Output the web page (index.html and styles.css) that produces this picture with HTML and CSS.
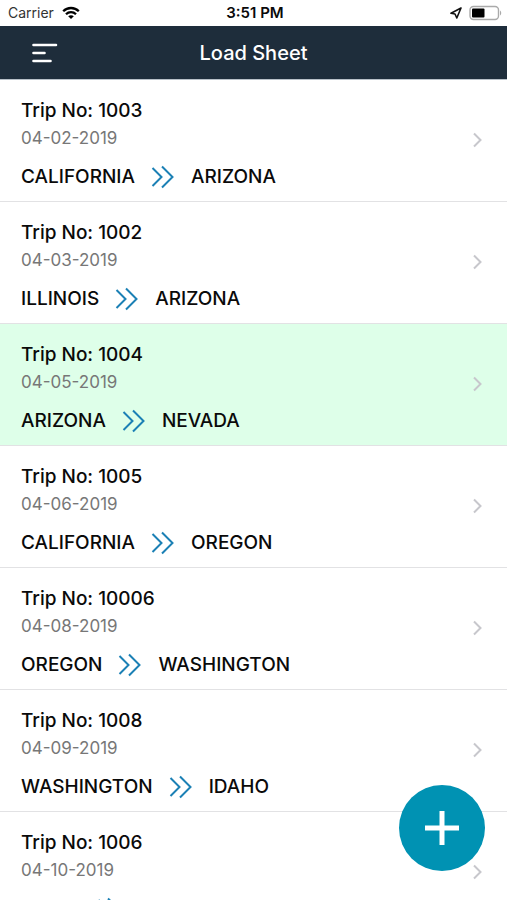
FILE: index.html
```html
<!DOCTYPE html>
<html lang="en">
<head>
  <meta charset="UTF-8">
  <meta name="viewport" content="width=device-width, initial-scale=1.0">
  <title>Load Sheet</title>
  <link rel="stylesheet" href="styles.css">
</head>
<body>
  <!-- Shared icons -->
  <svg class="sprite" aria-hidden="true">
    <symbol id="arrows" viewBox="0 0 24 24">
      <path d="M1.500 3 10.500 12 1.500 21M11 1.500 21.500 12 11 22.500" fill="none" stroke="#1b80b5" stroke-width="2"/>
    </symbol>
    <symbol id="chevron" viewBox="0 0 12 16">
      <path d="M2 1.500 8.500 8 2 14.500" fill="none" stroke="#c7c7cc" stroke-width="2"/>
    </symbol>
  </svg>

  <div class="app">
    <div class="status-bar">
      <div class="carrier">
        <span>Carrier</span>
        <svg width="18" height="14" viewBox="0 0 18 14">
          <g fill="none" stroke="#000" stroke-width="2.300">
            <path d="M1.200 5.200C5.500.9 12.500.9 16.800 5.200"/>
            <path d="M4 8.200C6.800 5.400 11.200 5.400 14 8.200"/>
          </g>
          <path d="M6.200 10.300C7.800 8.900 10.200 8.900 11.800 10.300L9 13Z" fill="#000"/>
        </svg>
      </div>
      <span class="time">3:51 PM</span>
      <div class="indicators">
        <svg width="12" height="12" viewBox="0 0 12 12">
          <path d="M11 1 1 6.300 5 7 6.800 11Z" fill="none" stroke="#111" stroke-width="1.600" stroke-linejoin="round"/>
        </svg>
        <svg width="33" height="16" viewBox="0 0 33 16">
          <rect x="1" y="1.500" width="28.500" height="13" rx="3.500" fill="#fff" stroke="#aaa" stroke-width="1.400"/>
          <path d="M31 5.500C32.600 6.300 32.600 9.700 31 10.500Z" fill="#aaa"/>
          <rect x="3" y="3.500" width="12.500" height="9" rx="1" fill="#000"/>
        </svg>
      </div>
    </div>

    <header class="navbar">
      <button class="menu-button" type="button" aria-label="Menu">
        <svg width="26" height="20" viewBox="0 0 26 20">
          <path d="M1.500 2H24M1.500 10H12.500M1.500 18H18.500" stroke="#fff" stroke-width="2.600" stroke-linecap="round"/>
        </svg>
      </button>
      <h1>Load Sheet</h1>
    </header>

    <main class="trips">
      <a class="trip" href="#1003">
        <div class="info">
          <h2>Trip No: 1003</h2>
          <p class="date">04-02-2019</p>
          <p class="route"><span>CALIFORNIA</span><svg class="arrows"><use href="#arrows"/></svg><span>ARIZONA</span></p>
        </div>
        <svg class="chevron"><use href="#chevron"/></svg>
      </a>
      <a class="trip" href="#1002">
        <div class="info">
          <h2>Trip No: 1002</h2>
          <p class="date">04-03-2019</p>
          <p class="route"><span>ILLINOIS</span><svg class="arrows"><use href="#arrows"/></svg><span>ARIZONA</span></p>
        </div>
        <svg class="chevron"><use href="#chevron"/></svg>
      </a>
      <a class="trip active" href="#1004">
        <div class="info">
          <h2>Trip No: 1004</h2>
          <p class="date">04-05-2019</p>
          <p class="route"><span>ARIZONA</span><svg class="arrows"><use href="#arrows"/></svg><span>NEVADA</span></p>
        </div>
        <svg class="chevron"><use href="#chevron"/></svg>
      </a>
      <a class="trip" href="#1005">
        <div class="info">
          <h2>Trip No: 1005</h2>
          <p class="date">04-06-2019</p>
          <p class="route"><span>CALIFORNIA</span><svg class="arrows"><use href="#arrows"/></svg><span>OREGON</span></p>
        </div>
        <svg class="chevron"><use href="#chevron"/></svg>
      </a>
      <a class="trip" href="#10006">
        <div class="info">
          <h2>Trip No: 10006</h2>
          <p class="date">04-08-2019</p>
          <p class="route"><span>OREGON</span><svg class="arrows"><use href="#arrows"/></svg><span>WASHINGTON</span></p>
        </div>
        <svg class="chevron"><use href="#chevron"/></svg>
      </a>
      <a class="trip" href="#1008">
        <div class="info">
          <h2>Trip No: 1008</h2>
          <p class="date">04-09-2019</p>
          <p class="route"><span>WASHINGTON</span><svg class="arrows"><use href="#arrows"/></svg><span>IDAHO</span></p>
        </div>
        <svg class="chevron"><use href="#chevron"/></svg>
      </a>
      <a class="trip" href="#1006">
        <div class="info">
          <h2>Trip No: 1006</h2>
          <p class="date">04-10-2019</p>
          <p class="route"><span>IDAHO</span><svg class="arrows"><use href="#arrows"/></svg></p>
        </div>
        <svg class="chevron"><use href="#chevron"/></svg>
      </a>
    </main>

    <button class="add-button" type="button" aria-label="Add trip">
      <svg width="36" height="36" viewBox="0 0 36 36">
        <path d="M18 1V35M1 18H35" stroke="#fff" stroke-width="5"/>
      </svg>
    </button>
  </div>
</body>
</html>
```
FILE: styles.css
```css
:root {
  --navy: #1e2d3b;
  --teal: #0092b3;
  --highlight: #deffe9;
  --line: #e2e2e4;
  --muted: #777;
}

* {
  margin: 0;
  padding: 0;
  box-sizing: border-box;
}

body {
  font-family: Inter, 'Liberation Sans', sans-serif;
  background: #fff;
  color: #0a0a0a;
}

button {
  border: none;
  cursor: pointer;
}

svg {
  display: block;
  flex-shrink: 0;
}

.sprite {
  position: absolute;
  width: 0;
  height: 0;
}

.app {
  display: flex;
  flex-direction: column;
  height: 100vh;
}

/* Status bar */
.status-bar {
  display: grid;
  grid-template-columns: 1fr auto 1fr;
  align-items: center;
  padding: 0 5px 0 8px;
  font-size: 14px;
  line-height: 26px;
}

.carrier {
  display: flex;
  align-items: center;
  gap: 8px;
  color: #333;
}

.time {
  font-size: 15px;
  font-weight: 600;
}

.indicators {
  display: flex;
  align-items: center;
  justify-content: flex-end;
  gap: 7px;
}

/* Header */
.navbar {
  display: grid;
  grid-template-columns: 1fr auto 1fr;
  align-items: center;
  height: 54px;
  flex-shrink: 0;
  padding: 0 24px;
  background: var(--navy);
  border-bottom: 1px solid #b8c0c8;
  color: #fff;
}

.navbar h1 {
  font-size: 20px;
  font-weight: 500;
}

.menu-button {
  justify-self: start;
  padding: 8px;
  background: none;
}

/* Trip list */
.trips {
  flex: 1;
  min-height: 0;
  overflow-y: auto;
  scrollbar-width: none;
}

.trip {
  display: flex;
  align-items: center;
  justify-content: space-between;
  padding: 19px 23px 12px 21px;
  border-bottom: 1px solid var(--line);
  color: inherit;
  text-decoration: none;
  line-height: 24px;
}

.trip.active {
  background: var(--highlight);
}

.trip h2 {
  font-size: 19px;
  font-weight: 500;
}

.date {
  margin: 3px 0 15px;
  font-size: 17px;
  color: var(--muted);
}

.route {
  display: flex;
  align-items: center;
  gap: 16px;
  font-size: 19px;
  font-weight: 500;
}

.arrows {
  width: 24px;
  height: 24px;
}

.chevron {
  width: 12px;
  height: 16px;
  margin-bottom: 8px;
}

/* Floating button */
.add-button {
  position: fixed;
  right: 22px;
  bottom: 29px;
  display: flex;
  align-items: center;
  justify-content: center;
  width: 86px;
  height: 86px;
  border-radius: 50%;
  background: var(--teal);
}
```
